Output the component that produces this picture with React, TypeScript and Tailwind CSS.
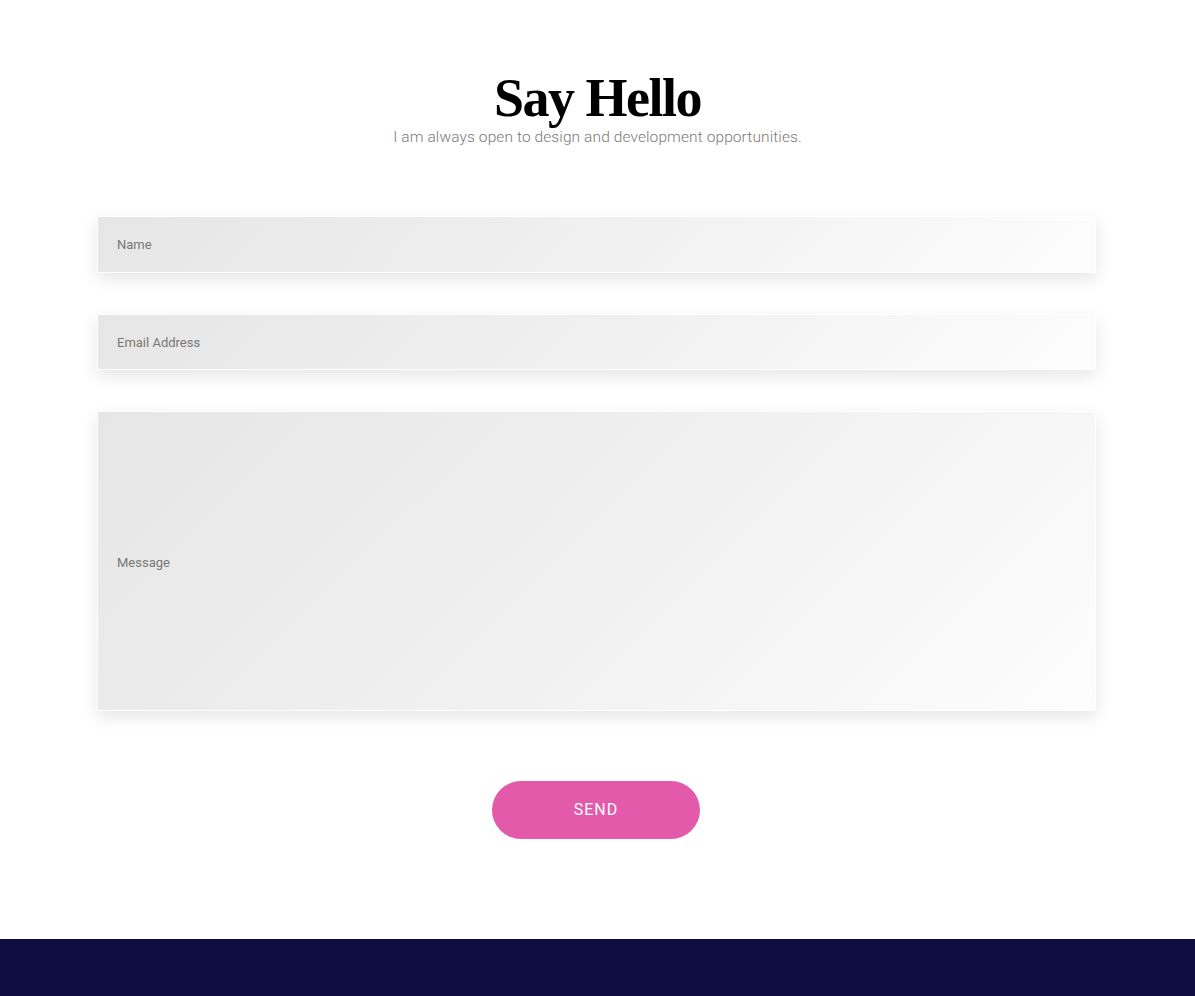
import React from "react";

export default function App() {
  const field =
    "w-full border border-white bg-[linear-gradient(135deg,#e6e6e6_0%,#f0f0f0_50%,#fdfdfd_100%)] shadow-[0_6px_16px_rgba(0,0,0,0.10)] pl-[19px] pr-5 text-[13px] text-[#777] outline-none placeholder:text-[#777]";
  return (
    <div className="min-h-[996px] bg-white flex flex-col" style={{ fontFamily: "Roboto, 'Liberation Sans', sans-serif" }}>
      <div className="h-[939px] flex flex-col items-center pt-[74px]">
        <h1 className="text-[54px] leading-[48px] h-[48px] font-bold text-black tracking-[-1.5px]" style={{ fontFamily: "'Liberation Serif', serif" }}>
          Say Hello
        </h1>
        <p className="text-[15.5px] font-light text-[#7a7a7a] leading-[18px] mt-[6px] tracking-[0.1px]">
          I am always open to design and development opportunities.
        </p>
        <form className="w-[999px] self-start ml-[97px] mt-[70px] flex flex-col" onSubmit={(e) => e.preventDefault()}>
          <input className={field + " h-[57px]"} placeholder="Name" />
          <input className={field + " h-[56px] mt-[41px]"} placeholder="Email Address" />
          <textarea className={field + " h-[300px] mt-[41px] resize-none pt-[141px]"} placeholder="Message" />
          <div className="flex justify-center mt-[70px] pr-[1px]">
            <button type="submit" className="w-[208px] h-[58px] rounded-full bg-[#e35aab] text-white text-[16px] tracking-[1px]">
              SEND
            </button>
          </div>
        </form>
      </div>
      <div className="h-[57px] bg-[#0f0e42]" />
    </div>
  );
}
